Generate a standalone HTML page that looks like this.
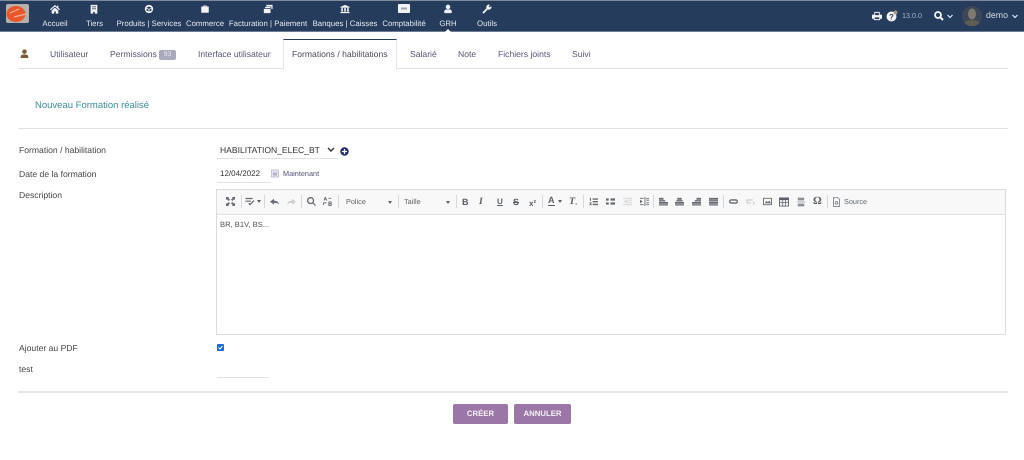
<!DOCTYPE html>
<html lang="fr"><head><meta charset="utf-8"><title>Formation</title>
<style>
html,body{margin:0;padding:0;background:#fff}
html{overflow:hidden}
body{width:1024px;height:460px;overflow:hidden;position:relative;font-family:"Liberation Sans",Arial,sans-serif;color:#444;text-rendering:geometricPrecision;filter:blur(.3px)}
.a{position:absolute;white-space:nowrap}
.top{position:absolute;left:0;top:0;width:1024px;height:31.500px;background:#263c5c;border-top:1px solid #7d8a9c;box-sizing:border-box;border-bottom:1px solid #6d7c91}
.n{position:absolute;top:17.500px;font-size:7.800px;color:#e4e8ee;transform:translateX(-50%);white-space:nowrap;line-height:11px}
.ni{position:absolute;top:3.500px;width:10px;height:10px;fill:#f1f3f6}
.t{position:absolute;top:49px;font-size:8.600px;line-height:11px;color:#55557a;white-space:nowrap}
.l{position:absolute;left:19px;font-size:8.600px;line-height:11px;color:#444;white-space:nowrap}
.hr{position:absolute;height:1px;background:#e2e2e2}
.tb{position:absolute;top:197px;width:9px;height:9px;fill:#666a72;stroke:none}
.sep{position:absolute;top:195px;width:1px;height:13px;background:#d8d8d8}
.d{fill:#cfcfcf}
.bt{position:absolute;top:196.500px;color:#565a62;line-height:10px}
.btn{position:absolute;top:404px;height:20px;background:#9a77a6;border-radius:2px;color:#f6f1f7;font-size:7.800px;font-weight:bold;line-height:20px;text-align:center}
</style></head><body>
<div class="top"></div>
<svg class="a" style="left:6px;top:4px" width="23" height="19" viewBox="0 0 23 19"><rect width="23" height="19" rx="2" fill="#b5b0ac"/><ellipse cx="10" cy="10" rx="9.500" ry="8" fill="#e8562a"/><path d="M4 9l9-4M8 13l12-3" stroke="#f0b39a" stroke-width="1.200"/></svg>

<svg class="ni" style="left:50px" viewBox="0 0 12 12"><path d="M6 1L0 6.500l1 1L6 3l5 4.500 1-1-2-1.800V2H8.500v1.400zM2 8v3.500h3V9h2v2.500h3V8L6 4.300z"/></svg>
<svg class="ni" style="left:89px" viewBox="0 0 12 12"><path fill-rule="evenodd" d="M2 1h8v10.500H7V9.500H5v2H2zM4 2.500v1.500h1.500V2.500zM6.500 2.500v1.500H8V2.500zM4 5v1.500h1.500V5zM6.500 5v1.500H8V5z"/></svg>
<svg class="ni" style="left:144px" viewBox="0 0 12 12"><path fill-rule="evenodd" d="M6 1a5 5 0 1 0 0 10A5 5 0 0 0 6 1zM3 4.500L6 3l3 1.500-3 1.500zM3 5.500l2.500 1.200V9L3 7.800zM6.500 6.700L9 5.500v2.300L6.500 9z"/></svg>
<svg class="ni" style="left:200px" viewBox="0 0 12 12"><path fill-rule="evenodd" d="M4 3V1.800h4V3h2.500v7.500h-9V3zM5 3h2V2.700H5z"/></svg>
<svg class="ni" style="left:263px" viewBox="0 0 12 12"><path d="M4 1h7.500v5H10V3H4zM2.500 3.500H9V5H2.500zM1 5.800h8V11H1z"/></svg>
<svg class="ni" style="left:340px" viewBox="0 0 12 12"><path d="M6 1l5.500 2.500v1h-11v-1zM1.500 5h2v4h-2zM5 5h2v4H5zM8.500 5h2v4h-2zM.5 9.500h11V11H.5z"/></svg>
<svg class="a" style="left:398px;top:4px" width="12" height="9" viewBox="0 0 12 9"><rect width="12" height="9" rx="1" fill="#f1f3f6"/><rect x="3" y="3.500" width="6" height="2" fill="#9aa4b2"/></svg>
<svg class="ni" style="left:443px" viewBox="0 0 12 12"><circle cx="6" cy="3.500" r="2.700"/><path d="M1.500 11V9a3 3 0 0 1 3-2.500h3a3 3 0 0 1 3 2.500v2z"/></svg>
<svg class="ni" style="left:482px" viewBox="0 0 12 12"><path d="M1 11l-.5-1 5-5A3 3 0 0 1 9.500 1L8 3l1 1 2-1.500A3 3 0 0 1 7 6.500l-5 5z"/></svg>
<div class="a" style="left:445px;top:28.500px;width:0;height:0;border-left:3px solid transparent;border-right:3px solid transparent;border-bottom:3px solid #fff"></div>

<div class="n" style="left:55px">Accueil</div>
<div class="n" style="left:94.500px">Tiers</div>
<div class="n" style="left:149px">Produits | Services</div>
<div class="n" style="left:205px">Commerce</div>
<div class="n" style="left:268px">Facturation | Paiement</div>
<div class="n" style="left:345px">Banques | Caisses</div>
<div class="n" style="left:404px">Comptabilité</div>
<div class="n" style="left:448px">GRH</div>
<div class="n" style="left:487px">Outils</div>

<svg class="a" style="left:872px;top:11px" width="10" height="10" viewBox="0 0 11 11"><path fill="#f4f5f7" fill-rule="evenodd" d="M2.500 1h6v3h1.500a1 1 0 0 1 1 1v3.500H9V10H2V8.500H0V5a1 1 0 0 1 1-1h1.500zM3.500 2v2.500h4V2zM3 7v2h5V7z"/></svg>
<svg class="a" style="left:886px;top:10px" width="12" height="12" viewBox="0 0 12 12"><circle cx="5.500" cy="6.500" r="5" fill="#f4f5f7"/><circle cx="9.500" cy="2.500" r="2" fill="#a89a85"/><text x="5.500" y="9.500" font-size="8" font-weight="bold" text-anchor="middle" fill="#263c5c" font-family="Liberation Sans">?</text></svg>
<div class="a" style="left:902px;top:11px;font-size:7.200px;line-height:10px;color:#aab3c0">13.0.0</div>
<svg class="a" style="left:934px;top:11px" width="10" height="10" viewBox="0 0 10 10"><circle cx="4" cy="4" r="3" fill="none" stroke="#f4f5f7" stroke-width="1.800"/><path d="M6 6l3 3" stroke="#f4f5f7" stroke-width="2"/></svg>
<svg class="a" style="left:947px;top:14px" width="6" height="5" viewBox="0 0 6 5"><path d="M.5 1L3 3.500 5.500 1" fill="none" stroke="#e4e8ee" stroke-width="1.200"/></svg>
<svg class="a" style="left:962px;top:6px" width="20" height="20" viewBox="0 0 20 20"><circle cx="10" cy="10" r="10" fill="#3d4756"/><ellipse cx="10" cy="8" rx="4" ry="5.500" fill="#7d7a70"/><path d="M2.500 17c2-4 13-4 15 0a10 10 0 0 1-15 0z" fill="#5f5c52"/></svg>
<div class="a" style="left:986px;top:10px;font-size:8.800px;line-height:11px;color:#d5dae1">demo</div>
<svg class="a" style="left:1012px;top:14px" width="6" height="5" viewBox="0 0 6 5"><path d="M.5 1L3 3.500 5.500 1" fill="none" stroke="#e4e8ee" stroke-width="1.200"/></svg>

<svg class="a" style="left:20px;top:49px" width="9" height="10" viewBox="0 0 10 11"><circle cx="5" cy="2.800" r="2.500" fill="#7a5a3a"/><path d="M.8 10V8a3 3 0 0 1 3-2h2.400a3 3 0 0 1 3 2v2z" fill="#7a5a3a"/></svg>
<div class="t" style="left:50px">Utilisateur</div>
<div class="t" style="left:110px">Permissions</div>
<div class="a" style="left:159px;top:50px;width:17px;height:10px;border-radius:2px;background:#a9a9bd;color:#e8e8ef;font-size:7px;line-height:10px;text-align:center">93</div>
<div class="t" style="left:198px">Interface utilisateur</div>
<div class="a" style="left:283px;top:39px;width:114px;height:30px;box-sizing:border-box;border-top:1px solid #263c5c;border-left:1px solid #e6e6e6;border-right:1px solid #e6e6e6;background:#fff;z-index:2"></div>
<div class="t" style="left:292px;z-index:3;color:#4b4b5e">Formations / habilitations</div>
<div class="t" style="left:410px">Salarié</div>
<div class="t" style="left:458px">Note</div>
<div class="t" style="left:498px">Fichiers joints</div>
<div class="t" style="left:572px">Suivi</div>
<div class="hr" style="left:18px;top:68px;width:990px"></div>

<div class="a" style="left:35px;top:100px;font-size:9.500px;line-height:12px;color:#3c8a9a">Nouveau Formation réalisé</div>
<div class="hr" style="left:18px;top:128px;width:990px"></div>

<div class="l" style="top:145px">Formation / habilitation</div>
<div class="a" style="left:220px;top:145px;font-size:8.550px;line-height:11px;color:#333">HABILITATION_ELEC_BT</div>
<svg class="a" style="left:327px;top:147px" width="8" height="6" viewBox="0 0 8 6"><path d="M1 1l3 3 3-3" fill="none" stroke="#333" stroke-width="1.400"/></svg>
<div class="hr" style="left:217px;top:158px;width:121px"></div>
<svg class="a" style="left:340px;top:147px" width="9" height="9" viewBox="0 0 9 9"><circle cx="4.500" cy="4.500" r="4.200" fill="#1d2a6b"/><path d="M2 4.500h5M4.500 2v5" stroke="#fff" stroke-width="1.300"/></svg>

<div class="l" style="top:169px">Date de la formation</div>
<div class="a" style="left:220px;top:168px;font-size:8px;line-height:11px;color:#333">12/04/2022</div>
<div class="hr" style="left:217px;top:182px;width:54px"></div>
<svg class="a" style="left:271px;top:169px" width="8" height="9" viewBox="0 0 8 9"><rect x=".5" y="1" width="7" height="7" fill="#e6e4f0" stroke="#c4c0d8"/><rect x="2" y="3.500" width="4" height="3" fill="#b4b0cc"/></svg>
<div class="a" style="left:283px;top:169px;font-size:7.300px;line-height:10px;color:#50507a">Maintenant</div>

<div class="l" style="top:190px">Description</div>

<div class="a" style="left:216px;top:189px;width:790px;height:146px;box-sizing:border-box;border:1px solid #dcdcdc"></div>
<div class="a" style="left:217px;top:190px;width:788px;height:24px;background:#f8f8f8;border-bottom:1px solid #e0e0e0"></div>

<svg class="tb" style="left:226px" viewBox="0 0 10 10"><path d="M0 0h3.500L2.500 1l2 2-1.500 1.500-2-2L0 3.500zM10 0v3.500L9 2.500l-2 2L5.500 3l2-2L6.500 0zM0 10V6.500l1 1 2-2L4.500 7l-2 2 1 1zM10 10H6.500l1-1-2-2L7 5.500l2 2 1-1z"/></svg>
<div class="sep" style="left:241px"></div>
<svg class="tb" style="left:245px;width:10px" viewBox="0 0 10 10"><path d="M0 1h8v1.300H0zM0 4h6v1.300H0zM3 7.500l1-1 1 1 4-4 1 1-5 5z"/></svg>
<svg class="a" style="left:257px;top:200px" width="4" height="3"><path d="M0 0h4L2 3z" fill="#5b6068"/></svg>
<div class="sep" style="left:264px"></div>
<svg class="tb" style="left:270px" viewBox="0 0 10 10"><path d="M4.500 2v2C8 4 9.500 6 10 8.500 8.500 6.800 7 6.500 4.500 6.500v2L0 5.300z"/></svg>
<svg class="tb d" style="left:287px" viewBox="0 0 10 10"><path class="d" d="M5.500 2v2C2 4 .5 6 0 8.500 1.500 6.800 3 6.500 5.500 6.500v2L10 5.300z"/></svg>
<div class="sep" style="left:301px"></div>
<svg class="tb" style="left:307px" viewBox="0 0 10 10"><path fill-rule="evenodd" d="M4 0a4 4 0 0 1 3.200 6.300L10 9l-1 1-2.700-2.800A4 4 0 1 1 4 0zM4 1.500a2.500 2.500 0 1 0 0 5 2.500 2.500 0 0 0 0-5z"/></svg>
<svg class="tb" style="left:323px" viewBox="0 0 10 10"><path d="M2 0h1.200l1.500 4H3.600l-.3-.9H2l-.3.9H.6zM2.300 2.300h.7L2.650 1.200zM6 5h3.500v5H6zM7 6v1h1.500V6zM7 8v1h1.500V8zM0 6h4v1H1v2H0zM6 1h3v1H6z"/></svg>
<div class="sep" style="left:338px"></div>
<div class="a" style="left:346px;top:197px;font-size:7.300px;line-height:10px;color:#5c5c5c">Police</div>
<svg class="a" style="left:388px;top:201px" width="4" height="3"><path d="M0 0h4L2 3z" fill="#5b6068"/></svg>
<div class="sep" style="left:398px"></div>
<div class="a" style="left:404px;top:197px;font-size:7.300px;line-height:10px;color:#5c5c5c">Taille</div>
<svg class="a" style="left:446px;top:201px" width="4" height="3"><path d="M0 0h4L2 3z" fill="#5b6068"/></svg>
<div class="sep" style="left:456px"></div>

<div class="bt" style="left:462px;font:bold 9px/10px 'Liberation Sans'">B</div>
<div class="bt" style="left:479px;font:italic bold 9.500px/10px 'Liberation Serif'">I</div>
<div class="bt" style="left:497px;font:bold 8px/10px 'Liberation Sans';text-decoration:underline">U</div>
<div class="bt" style="left:513px;font:bold 9px/10px 'Liberation Sans';text-decoration:line-through">S</div>
<div class="bt" style="left:529px;font:bold 8px/10px 'Liberation Sans'">x<span style="font-size:4.500px;vertical-align:3px">2</span></div>
<div class="sep" style="left:542px"></div>
<div class="bt" style="left:548px;top:196px;font:bold 9px/9px 'Liberation Sans';border-bottom:1.500px solid #565a62">A</div>
<svg class="a" style="left:558px;top:200px" width="4" height="3"><path d="M0 0h4L2 3z" fill="#5b6068"/></svg>
<div class="bt" style="left:569px;font:italic bold 10px/10px 'Liberation Serif'">T<span style="font-size:4.500px;vertical-align:-1px;font-style:normal;color:#888">x</span></div>
<div class="sep" style="left:583px"></div>

<svg class="tb" style="left:589px" viewBox="0 0 10 10"><path d="M4 1.500h6V3H4zM4 4.500h6V6H4zM4 7.500h6V9H4zM.8 1h1.400v3.500h-1zM.5 6h2.500v1L1.500 8H3v1H.5V8L2 7H.5z"/></svg>
<svg class="tb" style="left:606px" viewBox="0 0 10 10"><path d="M0 1.500h3v2.500H0zM5 1.500h5v2.500H5zM0 6h3v2.500H0zM5 6h5v2.500H5z"/></svg>
<svg class="tb" style="left:623px" viewBox="0 0 10 10"><path class="d" d="M5 0h1v10H5zM7 1h3v1H7zM7 3h3v1H7zM7 6h3v1H7zM7 8h3v1H7zM0 1h4v1H0zM0 8h4v1H0zM4 3L1 5l3 2z"/></svg>
<svg class="tb" style="left:640px" viewBox="0 0 10 10"><path d="M5 0h1v10H5zM7 1h3v1H7zM7 3h3v1H7zM7 6h3v1H7zM7 8h3v1H7zM0 1h4v1H0zM0 8h4v1H0zM0 3l3 2-3 2z"/></svg>
<div class="sep" style="left:653px"></div>
<svg class="tb" style="left:659px" viewBox="0 0 10 10"><path d="M0 1h5v2H0zM0 3.500h7v1.500H0zM0 5.500h10v2H0zM0 8h10v1.500H0z"/></svg>
<svg class="tb" style="left:675px" viewBox="0 0 10 10"><path d="M2.500 1h5v2h-5zM1.500 3.500h7v1.500h-7zM0 5.500h10v2H0zM0 8h10v1.500H0z"/></svg>
<svg class="tb" style="left:692px" viewBox="0 0 10 10"><path d="M5 1h5v2H5zM3 3.500h7v1.500H3zM0 5.500h10v2H0zM0 8h10v1.500H0z"/></svg>
<svg class="tb" style="left:709px" viewBox="0 0 10 10"><path d="M0 1h10v2H0zM0 3.500h10v1.500H0zM0 5.500h10v2H0zM0 8h10v1.500H0z"/></svg>
<div class="sep" style="left:723px"></div>
<svg class="tb" style="left:729px" viewBox="0 0 10 10"><path fill-rule="evenodd" d="M2.500 2.500h5a2.500 2.500 0 0 1 0 5h-5a2.500 2.500 0 0 1 0-5zM2.500 4a1 1 0 0 0 0 2h5a1 1 0 0 0 0-2z"/></svg>
<svg class="tb" style="left:746px" viewBox="0 0 10 10"><path class="d" fill-rule="evenodd" d="M2.500 2.500h5v1.500h-5a1 1 0 0 0 0 2H5v1.500H2.500a2.500 2.500 0 0 1 0-5zM8 5h1.500v3.500H8z"/></svg>
<svg class="tb" style="left:763px" viewBox="0 0 10 10"><path fill-rule="evenodd" d="M0 1h10v8H0zM1 2v6h8V2z"/><path d="M2 7l2-2.500L5.500 6l1.500-2 2 3z"/></svg>
<svg class="a" style="left:779px;top:196.500px" width="10" height="10" viewBox="0 0 11 11"><path fill="#5b6068" fill-rule="evenodd" d="M0 .5h11v10H0zM1 3.500v2h2.700v-2zM4.500 3.500v2h2.200v-2zM7.500 3.500v2H10v-2zM1 6.300v3.200h2.700V6.300zM4.500 6.300v3.200h2.200V6.300zM7.500 6.300v3.200H10V6.300z"/></svg>
<svg class="a" style="left:797px;top:196.500px" width="8" height="10" viewBox="0 0 10 11"><path fill="#8c9096" d="M1 0h8v3.500H1zM0 5h10v1H0zM1 7.500h8V11H1z"/></svg>
<div class="a" style="left:813px;top:195px;font:11px/13px 'Liberation Serif';color:#565a62;font-weight:bold">Ω</div>
<div class="sep" style="left:827px"></div>
<svg class="a" style="left:833px;top:197px" width="7" height="10" viewBox="0 0 8 11"><path fill="none" stroke="#7c8087" d="M.5.500h5l2 2v8h-7z"/><circle cx="4" cy="6.500" r="1.500" fill="none" stroke="#7c8087"/></svg>
<div class="a" style="left:844px;top:197px;font-size:7.300px;line-height:10px;color:#5c6470">Source</div>

<div class="a" style="left:220px;top:220px;font-size:7.600px;line-height:10px;color:#555">BR, B1V, BS...</div>

<div class="l" style="top:343px">Ajouter au PDF</div>
<div class="a" style="left:217px;top:344px;width:7px;height:7px;background:#1a6fd6;border-radius:1px"><svg style="position:absolute;left:0;top:0" width="7" height="7" viewBox="0 0 7 7"><path d="M1.500 3.500l1.500 1.500 2.500-3" fill="none" stroke="#fff" stroke-width="1"/></svg></div>
<div class="l" style="top:364px">test</div>
<div class="hr" style="left:217px;top:377px;width:52px"></div>
<div class="hr" style="left:18px;top:391px;width:990px;height:2px;background:#e6e6e6"></div>

<div class="btn" style="left:453px;width:55px">CRÉER</div>
<div class="btn" style="left:514px;width:57px">ANNULER</div>
</body></html>
